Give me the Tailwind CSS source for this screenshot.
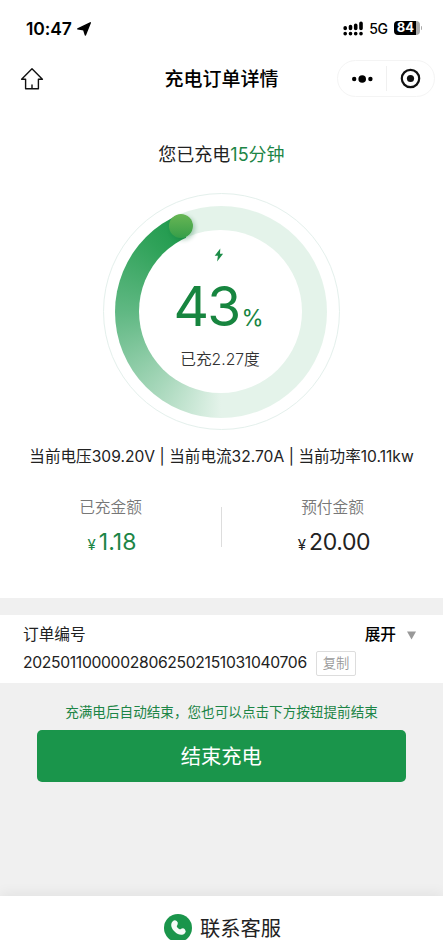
<!DOCTYPE html>
<html lang="zh-CN">
<head>
<meta charset="utf-8">
<meta name="viewport" content="width=device-width, initial-scale=1">
<title>充电订单详情</title>
<script src="https://cdn.jsdelivr.net/npm/@tailwindcss/browser@4"></script>
</head>
<body class="h-[940px] overflow-hidden bg-[#f0f0f0] font-['Inter','Noto_Sans_CJK_SC',sans-serif] text-[#222]">
<div class="flex h-[940px] w-[443px] flex-col whitespace-nowrap">
  <main class="flex h-[598px] shrink-0 flex-col bg-white">
    <!-- Status bar -->
    <div class="flex h-[56px] shrink-0 items-center justify-between pr-[21px] pl-[26px] text-black">
      <div class="flex items-center gap-[5px] pt-[2px]">
        <span class="text-[17.5px] font-semibold tracking-[-0.1px]">10:47</span>
        <svg class="size-[14px]" viewBox="0 0 14 14"><path d="M13.3 .8 8.4 13 6.7 7.7.8 6.9Z" fill="#000" stroke="#000" stroke-width="1.4" stroke-linejoin="round"/></svg>
      </div>
      <div class="flex items-center">
        <svg class="h-[15px] w-[20px]" viewBox="0 0 20 15" stroke="#000" stroke-width="3.6" stroke-linecap="round"><path d="M2.2 12.6v.1M7.5 12.6v.1M12.7 12.6v.1M18 12.6v.1M2.2 6.8v.6M7.5 5.6v1.8M12.7 4.2v3.2M18 2.2v5.2"/></svg>
        <span class="ml-[6px] pt-px text-[14px] font-medium tracking-[-0.4px]">5G</span>
        <div class="ml-[6px] flex h-[14px] w-[26px] items-center justify-center rounded-[4px] bg-[linear-gradient(90deg,#000_84%,#aaa_84%)] pr-[2px] text-[13px] font-bold text-white">84</div>
        <i class="ml-[1px] h-[4px] w-[1.5px] rounded-r bg-[#aaa]"></i>
      </div>
    </div>
    <!-- Navigation bar -->
    <header class="grid h-[45px] shrink-0 grid-cols-[1fr_auto_1fr] items-center">
      <svg class="ml-[20px] size-[24px]" viewBox="0 0 24 24" fill="none" stroke="#111" stroke-width="1.4" stroke-linejoin="round" stroke-linecap="round"><path d="M1.6 12.2 12 1.8l10.4 10.4h-4v9.5H5.6v-9.5ZM12 18v3.5"/></svg>
      <h1 class="pt-[4px] text-[19px] font-medium text-black">充电订单详情</h1>
      <div class="mr-[8px] flex h-[37px] w-[98px] items-center justify-self-end rounded-full border border-[#f4f4f4]">
        <svg class="h-[10px] w-[48px]" viewBox="0 0 48 10"><circle cx="16.2" cy="5" r="2.2"/><circle cx="24.2" cy="5" r="3.8"/><circle cx="32.4" cy="5" r="2.2"/></svg>
        <i class="h-[25px] w-px bg-[#f0f0f0]"></i>
        <svg class="ml-[13px] size-[21px]" viewBox="0 0 21 21"><circle cx="10.5" cy="10.5" r="8.7" fill="none" stroke="#111" stroke-width="2.2"/><circle cx="10.5" cy="10.5" r="3.6" fill="#111"/></svg>
      </div>
    </header>
    <p class="mt-[40px] h-[28px] text-center text-[18px] leading-[28px]">您已充电<span class="text-[#1c8546]">15分钟</span></p>
    <!-- Charge progress ring -->
    <section class="relative mt-[24px] ml-[102.5px] flex size-[237px] shrink-0 items-center justify-center rounded-full border border-[#e4f0ec]">
      <div class="flex size-[212px] items-center justify-center rounded-full bg-[conic-gradient(from_180deg,#e4f3ea_0deg,#a9d8bc_38deg,#60b883_90deg,#2fa259_135deg,#1f994c_155deg,#e4f3ea_155deg)] pr-[2px]">
        <div class="flex size-[163px] flex-col items-center rounded-full bg-white">
          <svg class="mt-[18px] mr-[2px] h-[14px] w-[10px]" viewBox="0 0 10 14"><path d="M6.3.5.7 7.8h3.2l-.8 5.7 6-7.7H6Z" fill="#1b8c47"/></svg>
          <div class="mt-[17px] mr-[3px] flex h-[54px] items-baseline leading-[54px] text-[#17853f]"><span class="text-[55px] tracking-[-1.7px]">43</span><span class="ml-[2px] text-[22.5px]">%</span></div>
          <p class="mt-[15px] text-[15.7px] leading-[24px] font-[350] text-[#333]">已充2.27度</p>
        </div>
      </div>
      <i class="absolute top-[20px] left-[65px] size-[24px] rounded-full bg-linear-to-b from-[#67b654] to-[#359e49] shadow-[2px_2px_4px_rgba(20,110,60,.3)]"></i>
    </section>
    <p class="mt-[15px] flex h-[24px] justify-center text-[15.6px] leading-[24px]"><span>当前电压309.20V</span><span class="px-[4.5px]">|</span><span>当前电流32.70A</span><span class="px-[4.5px]">|</span><span>当前功率10.11kw</span></p>
    <!-- Amounts -->
    <section class="mt-[26px] grid grid-cols-[221px_1px_221px] items-center text-center">
      <div><p class="h-[26px] text-[15.7px] leading-[26px] font-[350] text-[#777]">已充金额</p><p class="mt-[4px] h-[34px] pl-[3px] leading-[34px] text-[#1c8546]"><span class="mr-[3px] text-[15px]">¥</span><span class="text-[23px]">1.18</span></p></div>
      <i class="h-[40px] bg-[#ddd]"></i>
      <div><p class="h-[26px] text-[15.7px] leading-[26px] font-[350] text-[#777]">预付金额</p><p class="mt-[4px] h-[34px] pl-[3px] leading-[34px]"><span class="mr-[3px] text-[15px]">¥</span><span class="text-[23px] tracking-[-0.4px]">20.00</span></p></div>
    </section>
  </main>
  <!-- Order number -->
  <section class="mt-[17px] h-[68px] shrink-0 bg-white pt-[7px] pl-[23px]">
    <div class="flex h-[26px] items-center pr-[27px] text-[15.7px]"><span>订单编号</span><span class="ml-auto font-medium text-black">展开</span><svg class="ml-[11px] h-[9px] w-[9px]" viewBox="0 0 9 9"><path d="M0 .5h9L4.5 8.5Z" fill="#999"/></svg></div>
    <div class="mt-[2px] flex h-[26px] items-center"><span class="w-[293px] text-[15.7px] tracking-[-0.33px]"><span>20250110</span><span>0000</span><span>2806</span><span>2502</span><span>1510</span><span>3104</span><span>0706</span></span><button class="h-[25px] w-[40px] rounded-[2px] border border-[#ddd] text-[13.3px] leading-[22px] font-[350] text-[#999]">复制</button></div>
  </section>
  <p class="mt-[19px] h-[20px] text-center text-[13.6px] leading-[20px] text-[#1c8546]">充满电后自动结束，您也可以点击下方按钮提前结束</p>
  <button class="mr-auto ml-[37px] mt-[8px] h-[52px] w-[368.5px] shrink-0 rounded-[5px] bg-[#1a954b] pt-[2px] text-[20.3px] text-white">结束充电</button>
  <footer class="mt-auto flex h-[44px] shrink-0 justify-center gap-[8px] bg-white pt-[17px] pl-[2px] shadow-[0_-3px_12px_rgba(0,0,0,.06)]">
    <svg class="mt-px size-[28px] shrink-0" viewBox="0 0 28 28"><circle cx="14" cy="14" r="14" fill="#1a954b"/><g transform="rotate(45 14 14)"><path d="M5.500 12.800a3 2.900 0 0 1 5.900-.6c.1 1.500.7 1.900 2.600 1.900s2.600-.4 2.700-1.900a3 2.900 0 0 1 5.900.6c0 4-3.800 6.100-8.600 6.100s-8.500-2.100-8.500-6.100Z" fill="#f4fbf6"/></g></svg>
    <span class="text-[20.3px] leading-[32px]">联系客服</span>
  </footer>
</div>
</body>
</html>
